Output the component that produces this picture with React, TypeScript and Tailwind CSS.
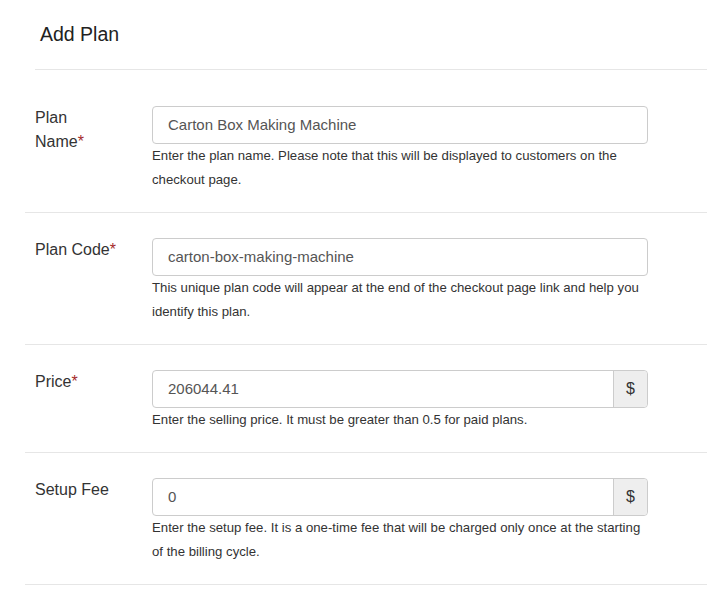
import React from 'react';

type Field = {
    label: string;
    required?: boolean;
    value: string;
    help: string;
    addon?: string;
};

const fields: Field[] = [
    {
        label: 'Plan Name',
        required: true,
        value: 'Carton Box Making Machine',
        help: 'Enter the plan name. Please note that this will be displayed to customers on the checkout page.',
    },
    {
        label: 'Plan Code',
        required: true,
        value: 'carton-box-making-machine',
        help: 'This unique plan code will appear at the end of the checkout page link and help you identify this plan.',
    },
    {
        label: 'Price',
        required: true,
        value: '206044.41',
        help: 'Enter the selling price. It must be greater than 0.5 for paid plans.',
        addon: '$',
    },
    {
        label: 'Setup Fee',
        value: '0',
        help: 'Enter the setup fee. It is a one-time fee that will be charged only once at the starting of the billing cycle.',
        addon: '$',
    },
];

function Row({ field, first }: { field: Field; first: boolean }) {
    return (
        <div className={`flex border-b border-[#e6e6e6] pb-[20px] ${first ? 'pt-[36px]' : 'pt-[25px]'}`}>
            <label className="w-[127px] shrink-0 pl-[10px] pr-[32px] text-[16px] leading-[24px] text-[#333]">
                {field.label}
                {field.required && <span className="text-[#a52a2a]">*</span>}
            </label>
            <div className="w-[496px]">
                <div className="flex h-[38px] rounded-[4px] border border-[#cccccc] bg-white">
                    <input
                        readOnly
                        value={field.value}
                        className="min-w-0 flex-1 bg-transparent px-[15px] text-[15px] text-[#555] outline-none"
                    />
                    {field.addon && (
                        <span className="flex w-[34px] items-center justify-center rounded-r-[4px] border-l border-[#cccccc] bg-[#eeeeee] text-[16px] text-[#333]">
                            {field.addon}
                        </span>
                    )}
                </div>
                <p className="text-[13.2px] leading-[24px] text-[#333]">{field.help}</p>
            </div>
        </div>
    );
}

export default function App() {
    return (
        <div className="min-h-screen bg-white pl-[25px] pr-[19px] font-['Liberation_Sans',Arial,sans-serif]">
            <div className="ml-[10px] border-b border-[#e6e6e6] pt-[22px] pb-[23px]">
                <h1 className="pl-[5px] text-[19.5px] leading-[24px] text-[#222]">Add Plan</h1>
            </div>
            {fields.map((f, i) => (
                <Row key={f.label} field={f} first={i === 0} />
            ))}
        </div>
    );
}
